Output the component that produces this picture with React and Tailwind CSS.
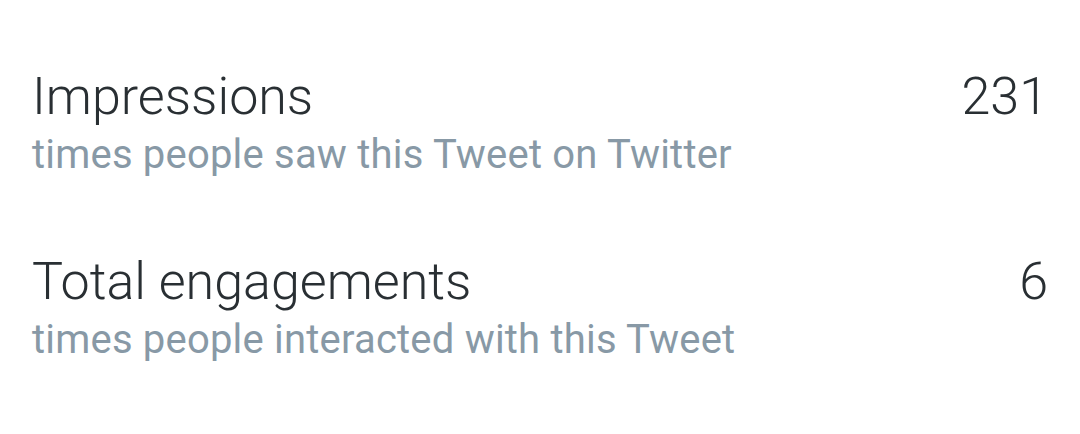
const stats = [
  { title: "Impressions", sub: "times people saw this Tweet on Twitter", value: "231" },
  { title: "Total engagements", sub: "times people interacted with this Tweet", value: "6" },
];

export default function App() {
  return (
    <div className="w-[1080px] h-[434px] bg-white pt-[65px] pl-8 pr-[32px] font-['Roboto',sans-serif]">
      {stats.map((s) => (
        <div key={s.title} className="flex justify-between items-start mb-[69px]">
          <div>
            <div className="text-[52px] leading-[64px] font-light text-[#292f33]">{s.title}</div>
            <div className="text-[40px] leading-[52px] tracking-[0.2px] text-[#8899a6]">{s.sub}</div>
          </div>
          <div className="text-[52px] leading-[64px] font-light text-[#292f33]">{s.value}</div>
        </div>
      ))}
    </div>
  );
}
